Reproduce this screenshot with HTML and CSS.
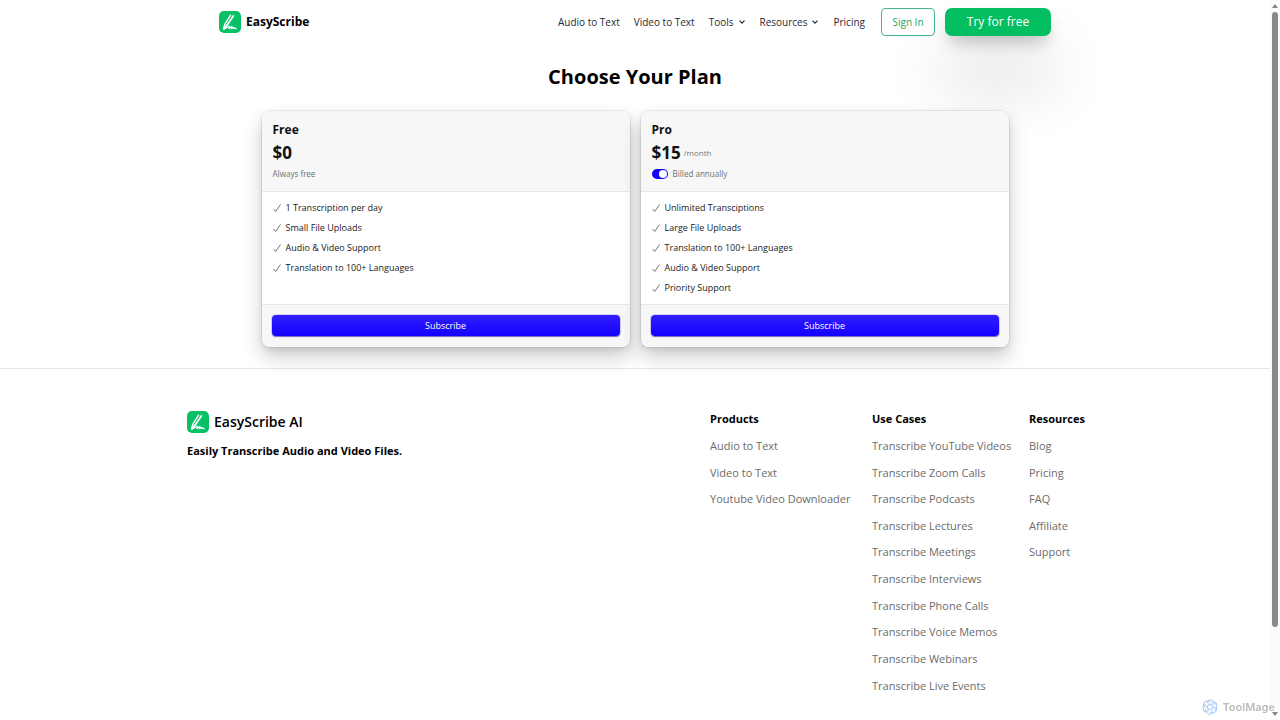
FILE: index.html
```html
<!DOCTYPE html>
<html lang="en">
<head>
<meta charset="utf-8">
<meta name="viewport" content="width=device-width, initial-scale=1">
<title>EasyScribe Pricing</title>
<link rel="stylesheet" href="styles.css">
</head>
<body>
<svg class="defs" aria-hidden="true">
  <symbol id="logo" viewBox="0 0 22 22">
    <rect width="22" height="22" rx="5" fill="#08c065"/>
    <path d="M4.500 17.800L6 12.800L11.600 4.200" fill="none" stroke="#fff" stroke-width="1.400" stroke-linecap="round" stroke-linejoin="round"/>
    <path d="M4.800 17.800L8 14.200L14.300 5" fill="none" stroke="#fff" stroke-width="1.800" stroke-linecap="round" stroke-linejoin="round"/>
    <path d="M5 18C7 17.500 8.800 15.500 10.500 15.200C10.400 16.500 9.300 18 10.700 17.400L12.800 15.400L12.700 17.600L14.500 16.300L14.800 17.700L16.100 17L17.300 17.700" fill="none" stroke="#fff" stroke-width="1.200" stroke-linejoin="round" stroke-linecap="round"/>
  </symbol>
  <symbol id="check" viewBox="0 0 10 10"><path d="M1.500 6L3.700 8.500L8.500 1.500" fill="none" stroke="#777" stroke-width="1"/></symbol>
  <symbol id="chevron" viewBox="0 0 8 8"><path d="M1.500 2.700L4 5.200L6.500 2.700" fill="none" stroke="#1f2937" stroke-width="1.200"/></symbol>
</svg>
<div class="page">
  <header class="header">
    <a class="brand" href="#"><svg class="logo" aria-hidden="true"><use href="#logo"/></svg>EasyScribe</a>
    <div class="header-right">
      <nav class="nav">
        <a class="nav-item" href="#">Audio to Text</a>
        <a class="nav-item" href="#">Video to Text</a>
        <button class="nav-item" type="button">Tools<svg class="chevron" aria-hidden="true"><use href="#chevron"/></svg></button>
        <button class="nav-item" type="button">Resources<svg class="chevron" aria-hidden="true"><use href="#chevron"/></svg></button>
        <a class="nav-item" href="#">Pricing</a>
      </nav>
      <div class="actions">
        <button class="sign-in" type="button">Sign In</button>
        <button class="try" type="button">Try for free</button>
      </div>
    </div>
  </header>
  <main class="main">
    <h1 class="title">Choose Your Plan</h1>
    <div class="plans">
      <section class="plan">
        <div class="plan-head">
          <h2 class="plan-name">Free</h2>
          <p class="price">$0</p>
          <p class="note">Always free</p>
        </div>
        <ul class="features">
          <li class="feature"><svg class="check" aria-hidden="true"><use href="#check"/></svg>1 Transcription per day</li>
          <li class="feature"><svg class="check" aria-hidden="true"><use href="#check"/></svg>Small File Uploads</li>
          <li class="feature"><svg class="check" aria-hidden="true"><use href="#check"/></svg>Audio &amp; Video Support</li>
          <li class="feature"><svg class="check" aria-hidden="true"><use href="#check"/></svg>Translation to 100+ Languages</li>
        </ul>
        <div class="plan-foot"><button class="subscribe" type="button">Subscribe</button></div>
      </section>
      <section class="plan">
        <div class="plan-head">
          <h2 class="plan-name">Pro</h2>
          <p class="price">$15<span class="period">/month</span></p>
          <label class="note"><input class="switch" type="checkbox" role="switch" checked>Billed annually</label>
        </div>
        <ul class="features">
          <li class="feature"><svg class="check" aria-hidden="true"><use href="#check"/></svg>Unlimited Transciptions</li>
          <li class="feature"><svg class="check" aria-hidden="true"><use href="#check"/></svg>Large File Uploads</li>
          <li class="feature"><svg class="check" aria-hidden="true"><use href="#check"/></svg>Translation to 100+ Languages</li>
          <li class="feature"><svg class="check" aria-hidden="true"><use href="#check"/></svg>Audio &amp; Video Support</li>
          <li class="feature"><svg class="check" aria-hidden="true"><use href="#check"/></svg>Priority Support</li>
        </ul>
        <div class="plan-foot"><button class="subscribe" type="button">Subscribe</button></div>
      </section>
    </div>
  </main>
  <footer class="footer">
    <div class="footer-inner">
      <div class="about">
        <a class="brand brand-footer" href="#"><svg class="logo" aria-hidden="true"><use href="#logo"/></svg>EasyScribe AI</a>
        <p class="tagline">Easily Transcribe Audio and Video Files.</p>
      </div>
      <div class="links">
        <div class="column">
          <h3 class="column-title">Products</h3>
          <a class="link" href="#">Audio to Text</a>
          <a class="link" href="#">Video to Text</a>
          <a class="link" href="#">Youtube Video Downloader</a>
        </div>
        <div class="column">
          <h3 class="column-title">Use Cases</h3>
          <a class="link" href="#">Transcribe YouTube Videos</a>
          <a class="link" href="#">Transcribe Zoom Calls</a>
          <a class="link" href="#">Transcribe Podcasts</a>
          <a class="link" href="#">Transcribe Lectures</a>
          <a class="link" href="#">Transcribe Meetings</a>
          <a class="link" href="#">Transcribe Interviews</a>
          <a class="link" href="#">Transcribe Phone Calls</a>
          <a class="link" href="#">Transcribe Voice Memos</a>
          <a class="link" href="#">Transcribe Webinars</a>
          <a class="link" href="#">Transcribe Live Events</a>
        </div>
        <div class="column">
          <h3 class="column-title">Resources</h3>
          <a class="link" href="#">Blog</a>
          <a class="link" href="#">Pricing</a>
          <a class="link" href="#">FAQ</a>
          <a class="link" href="#">Affiliate</a>
          <a class="link" href="#">Support</a>
        </div>
      </div>
    </div>
  </footer>
</div>
<div class="scrollbar" aria-hidden="true">
  <svg class="arrow" viewBox="0 0 6 4"><path d="M0 4L3 0L6 4Z" fill="#858585"/></svg>
  <div class="track"><div class="thumb"></div></div>
  <svg class="arrow" viewBox="0 0 6 4"><path d="M0 0L3 4L6 0Z" fill="#858585"/></svg>
</div>
<div class="watermark">
  <svg class="watermark-icon" viewBox="0 0 16 16" aria-hidden="true">
    <g fill="none" stroke="#a9c6f5" stroke-width="1">
      <circle cx="8" cy="8" r="2.500"/>
      <g id="petal"><path d="M8 5.500C4.500 5 5 1 8 .8C11 .8 13 3 12.500 6"/></g>
      <use href="#petal" transform="rotate(60 8 8)"/>
      <use href="#petal" transform="rotate(120 8 8)"/>
      <use href="#petal" transform="rotate(180 8 8)"/>
      <use href="#petal" transform="rotate(240 8 8)"/>
      <use href="#petal" transform="rotate(300 8 8)"/>
    </g>
  </svg>
  ToolMage
</div>
</body>
</html>
```
FILE: styles.css
```css
* { box-sizing: border-box; }
body {
  margin: 0;
  background: #fff;
  color: #111;
  font-family: "Open Sans", "Noto Sans", sans-serif;
  font-size: 11px;
  line-height: 16px;
}
h1, h2, h3, p, ul { margin: 0; padding: 0; }
ul { list-style: none; }
a { color: inherit; text-decoration: none; }
button { font: inherit; color: inherit; border: 0; background: none; padding: 0; cursor: pointer; }
.defs { position: absolute; width: 0; height: 0; }
.page { padding-right: 10px; }
.header {
  display: flex;
  align-items: center;
  justify-content: space-between;
  max-width: 832px;
  margin: 0 auto;
  padding: 8px 0;
}
.brand { display: flex; align-items: center; gap: 5px; font-size: 12px; font-weight: 700; color: #000; }
.logo { width: 22px; height: 22px; }
.header-right { display: flex; align-items: center; gap: 16px; font-size: 10px; }
.nav { display: flex; align-items: center; gap: 14px; color: #1f2937; }
.nav-item { display: flex; align-items: center; gap: 4px; white-space: nowrap; }
.chevron { width: 8px; height: 8px; }
.actions { display: flex; gap: 10px; }
.sign-in { width: 54px; height: 28px; border: 1px solid #4cb588; border-radius: 4px; color: #22a662; }
.try {
  width: 106px;
  height: 28px;
  border-radius: 7px;
  background: #04bf62;
  color: #fff;
  font-size: 12px;
  box-shadow: 0 10px 18px -5px rgba(0, 0, 0, .28), 0 48px 60px 6px rgba(0, 0, 0, .12);
}
.main { position: relative; max-width: 747px; margin: 0 auto; padding: 17px 0 21px; }
.title { font-size: 20px; line-height: 32px; font-weight: 700; text-align: center; color: #000; }
.plans { display: grid; grid-template-columns: 1fr 1fr; gap: 11px; margin-top: 18px; }
.plan {
  display: flex;
  flex-direction: column;
  border-radius: 8px;
  background: #fff;
  overflow: hidden;
  box-shadow: 0 0 0 1px rgba(0, 0, 0, .07), 0 3px 6px rgba(0, 0, 0, .08), 0 10px 20px rgba(0, 0, 0, .2);
}
.plan-head { height: 81px; padding: 11px 11px 9px; background: #f7f7f7; border-bottom: 1px solid #e6e6e6; }
.plan-name { font-size: 12px; font-weight: 700; }
.price { display: flex; align-items: center; gap: 3px; margin-top: 3px; font-size: 17px; line-height: 24px; font-weight: 700; }
.period { font-size: 8px; font-weight: 400; color: #777; }
.note { display: flex; align-items: center; gap: 5px; height: 16px; margin-top: 1px; font-family: "Noto Sans", sans-serif; font-size: 8px; color: #777; }
.switch {
  appearance: none;
  display: flex;
  align-items: center;
  justify-content: flex-end;
  width: 16px;
  height: 10px;
  margin: 0;
  padding: 1px;
  border-radius: 5px;
  background: #1400ff;
}
.switch::before { content: ""; width: 8px; height: 8px; border-radius: 4px; background: #fff; }
.features { display: flex; flex-direction: column; flex: 1; gap: 4px; padding: 8px; padding-left: 10px; }
.feature { display: flex; align-items: center; gap: 4px; font-size: 9px; color: #222; }
.check { width: 10px; height: 10px; }
.plan-foot { padding: 10px 10px 11px; background: #f7f7f7; border-top: 1px solid #e6e6e6; }
.subscribe {
  display: block;
  width: 100%;
  height: 21px;
  border-radius: 4px;
  background: linear-gradient(#301fff, #1400ff);
  box-shadow: 0 0 0 1px rgba(20, 0, 255, .15), 0 1px 1px rgba(20, 0, 120, .5);
  color: #fff;
  font-size: 9px;
  font-weight: 500;
}
.footer { border-top: 1px solid #e5e7eb; padding: 37px 0 20px; }
.footer-inner { display: flex; justify-content: space-between; max-width: 896px; margin: 0 auto; }
.about { display: flex; flex-direction: column; gap: 10px; padding-top: 5px; }
.brand-footer { font-size: 14px; font-weight: 600; }
.tagline { font-weight: 700; color: #000; }
.links { display: grid; grid-template-columns: 141px 136px 54px; gap: 21px; }
.column { display: grid; grid-template-rows: repeat(11, 1fr); align-items: center; height: 293px; white-space: nowrap; }
.column-title { font-size: 11px; font-weight: 700; color: #000; }
.link { color: #6b6b6b; }
.scrollbar {
  position: fixed;
  inset: 0 0 0 auto;
  display: flex;
  flex-direction: column;
  align-items: center;
  gap: 4px;
  width: 10px;
  padding: 4px 0;
  background: #fcfcfc;
}
.arrow { width: 6px; height: 4px; }
.track { flex: 1; }
.thumb { width: 6px; height: 88.4%; border-radius: 3px; background: #8a8a8a; }
.watermark {
  position: fixed;
  right: 5px;
  bottom: 5px;
  display: flex;
  align-items: center;
  gap: 4px;
  color: #bbb;
  font-family: Inter, sans-serif;
  font-size: 11px;
  font-weight: 600;
}
.watermark-icon { width: 16px; height: 16px; }
```
